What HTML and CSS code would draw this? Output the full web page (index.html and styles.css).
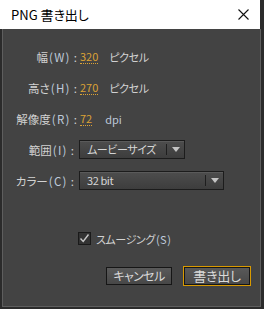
FILE: index.html
```html
<!DOCTYPE html>
<html lang="ja">
<head>
    <meta charset="UTF-8">
    <title>PNG 書き出し</title>
    <link rel="stylesheet" href="styles.css">
</head>
<body>
    <div class="titlebar">
        <span class="title">PNG 書き出し</span>
        <svg class="close" width="11" height="11" viewBox="0 0 11 11">
            <path d="M0.5 0.5 L10.5 10.5 M10.5 0.5 L0.5 10.5" stroke="#111" stroke-width="1.1" fill="none"/>
        </svg>
    </div>
    <div class="window">
        <div class="form">
            <span class="label">幅<span class="key">(W)</span><span class="colon">:</span></span>
            <div class="field"><span class="num">320</span><span class="unit">ピクセル</span></div>

            <span class="label">高さ<span class="key">(H)</span><span class="colon">:</span></span>
            <div class="field"><span class="num">270</span><span class="unit">ピクセル</span></div>

            <span class="label">解像度<span class="key">(R)</span><span class="colon">:</span></span>
            <div class="field"><span class="num">72</span><span class="unit dpi">dpi</span></div>

            <span class="label narrow">範囲<span class="key">(I)</span><span class="colon">:</span></span>
            <div class="field">
                <div class="select short">
                    <span class="select-text">ムービーサイズ</span>
                    <span class="select-arrow"></span>
                </div>
            </div>

            <span class="label narrow">カラー<span class="key">(C)</span><span class="colon">:</span></span>
            <div class="field">
                <div class="select long">
                    <span class="select-text">32 bit</span>
                    <span class="select-arrow"></span>
                </div>
            </div>
        </div>

        <div class="check-row">
            <span class="checkbox">
                <svg width="11" height="11" viewBox="0 0 11 11">
                    <path d="M1.5 5.5 L4.2 8.5 L9.5 1.5" stroke="#c8c8c8" stroke-width="1.4" fill="none"/>
                </svg>
            </span>
            <span class="check-label">スムージング<span class="key">(S)</span></span>
        </div>

        <div class="buttons">
            <span class="btn">キャンセル</span>
            <span class="btn primary">書き出し</span>
        </div>
    </div>
</body>
</html>
```

FILE: styles.css
```css
body {
    margin: 0;
    background-color: #2b2b2b;
    font-family: "Noto Sans CJK JP", "Noto Sans", sans-serif;
    font-size: 11px;
    letter-spacing: -0.4px;
    font-feature-settings: "palt";
    color: #d2d2d2;
    width: 264px;
    height: 309px;
    overflow: hidden;
    white-space: nowrap;
}
.titlebar {
    width: 260px;
    height: 29px;
    background-color: #ffffff;
    display: flex;
    align-items: center;
    justify-content: space-between;
    box-sizing: border-box;
    padding: 0 11px 0 11px;
}
.title {
    color: #000;
    font-size: 13px;
    letter-spacing: 0;
}
.close {
    display: block;
}
.window {
    margin-left: 2px;
    width: 259px;
    height: 278px;
    box-sizing: border-box;
    background-color: #434343;
    border: 1px solid #5e5e5e;
    border-top: none;
}
.form {
    padding-top: 12px;
    display: grid;
    grid-template-columns: 74px 1fr;
    grid-auto-rows: 31px;
    align-items: center;
    column-gap: 3px;
}
.label {
    text-align: right;
    line-height: 14px;
    font-size: 11.5px;
    letter-spacing: 0;
}
.label.narrow {
    padding-right: 3px;
}
.key {
    color: #bfcbdb;
    margin-left: 1px;
    letter-spacing: 1.3px;
}
.colon {
    margin-left: 3px;
}
.field {
    display: flex;
    align-items: center;
}
.num {
    color: #dba235;
    border-bottom: 1px dotted #dba235;
    line-height: 13px;
    letter-spacing: 0;
}
.unit {
    margin-left: 11px;
    line-height: 14px;
}
.unit.dpi {
    margin-left: 13px;
    color: #bcc8d8;
    letter-spacing: 0;
}
.select {
    margin-left: -1px;
    height: 19px;
    box-sizing: border-box;
    border: 1px solid #1c1c1c;
    background: linear-gradient(#4d4d4d, #3d3d3d);
    box-shadow: inset 0 1px 0 #5a5a5a;
    display: flex;
    align-items: center;
}
.select.short {
    width: 106px;
}
.select.long {
    width: 145px;
}
.select-text {
    flex: 1;
    padding-left: 7px;
    line-height: 15px;
    color: #d6d6d6;
}
.select-arrow {
    width: 17px;
    height: 11px;
    border-left: 1px solid #1e1e1e;
    position: relative;
}
.select-arrow::after {
    content: "";
    position: absolute;
    left: 5px;
    top: 3px;
    border-left: 4px solid transparent;
    border-right: 4px solid transparent;
    border-top: 5px solid #c4c4c4;
}
.check-row {
    margin-top: 36px;
    padding-left: 75px;
    display: flex;
    align-items: center;
    height: 13px;
}
.checkbox {
    width: 13px;
    height: 13px;
    box-sizing: border-box;
    border: 1px solid #1a1a1a;
    background-color: #333333;
    display: flex;
    align-items: center;
    justify-content: center;
}
.checkbox svg {
    display: block;
}
.check-label {
    margin-left: 5px;
    line-height: 14px;
}
.check-label .key {
    letter-spacing: 0.5px;
}
.buttons {
    margin-top: 21px;
    padding-right: 9px;
    display: flex;
    justify-content: flex-end;
    align-items: center;
    gap: 11px;
}
.btn {
    width: 66px;
    height: 18px;
    box-sizing: border-box;
    border: 1px solid #161616;
    background: linear-gradient(#5a5a5a, #474747);
    color: #dadada;
    font-size: 12px;
    letter-spacing: -0.6px;
    line-height: 16px;
    text-align: center;
}
.btn.primary {
    width: 68px;
    height: 20px;
    border: 1px solid #d99a00;
    box-shadow: inset 0 0 0 1px #161616;
    line-height: 18px;
    font-size: 13px;
    letter-spacing: -0.2px;
}
```
